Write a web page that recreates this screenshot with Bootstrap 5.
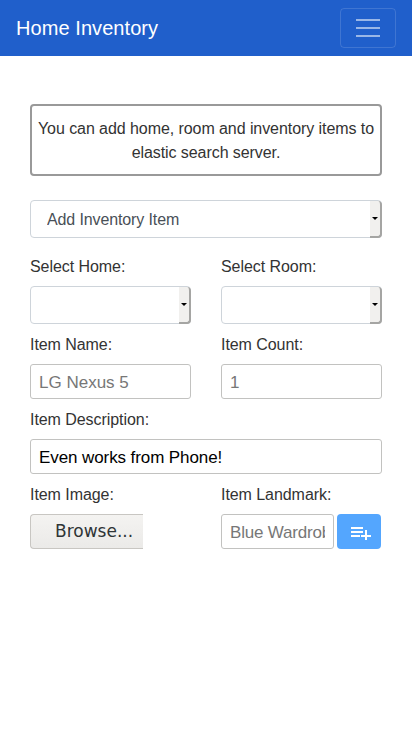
<!DOCTYPE html>
<html lang="en">
<head>
<meta charset="utf-8">
<meta name="viewport" content="width=device-width, initial-scale=1">
<title>Home Inventory</title>
<link rel="stylesheet" href="https://cdn.jsdelivr.net/npm/bootstrap@5.3.0/dist/css/bootstrap.min.css">
<style>
body{font-family:"Liberation Sans",Arial,sans-serif;font-size:16px;color:#212529;background:#fff}
.inv-nav{background:#205fcb;height:56px;padding:8px 16px}
.inv-brand{color:#fff;font-size:20px;line-height:24px;letter-spacing:.07px}
.inv-toggler{width:56px;height:40px;border:1px solid rgba(255,255,255,.14);border-radius:4px;background:transparent;padding:0;gap:6px}
.inv-toggler i{display:block;width:24px;height:2px;background:rgba(255,255,255,.55)}
.inv-page{padding:48px 30px 0}
.inv-note{border:2px solid #999;border-radius:4px;height:72px;padding:11px 4px 0;line-height:24px;margin-bottom:24px;color:#333;font-size:16px;letter-spacing:-.07px}
.inv-selwrap{position:relative;height:38px}
.inv-sel{display:block;width:100%;height:38px;border:1px solid #ced4da;border-radius:4px;background:#fff;color:#495057;font-size:16px;padding:2px 16px 0;letter-spacing:-.12px;appearance:none;-webkit-appearance:none}
.inv-arrow{position:absolute;top:1px;right:0;bottom:0;width:12px;background:#f1f0ee;border-right:2px solid #a5a5a3;border-bottom:2px solid #a5a5a3;border-radius:0 4px 4px 0;display:flex;align-items:center;justify-content:center}
.inv-arrow::after{content:"";display:block;border-style:solid;border-width:3px 3px 0;border-color:#000 transparent transparent}
.inv-grid{display:grid;grid-template-columns:161px 161px;column-gap:30px}
.inv-label{line-height:20px;height:20px;margin:0 0 9px;color:#333;letter-spacing:-.06px}
.inv-cell{margin-top:11px}
.inv-cell-first{margin-top:19px}
.inv-wide{grid-column:1 / span 2}
.inv-input{display:block;width:100%;height:35px;border:1px solid #c2c2c0;border-radius:3px;padding:2px 8px 0;font-family:"Liberation Sans",Arial,sans-serif;font-size:17px;color:#000;background:#fff;outline:0}
.inv-input-value{letter-spacing:-.09px}
.inv-input::placeholder{color:#777;opacity:1}
.inv-browse{display:block;width:113px;height:35px;border:1px solid #c8c6c2;border-right:0;border-radius:4px 0 0 4px;background:linear-gradient(#f4f3f1,#ebeae8);font-family:"DejaVu Sans",sans-serif;font-size:17px;color:#2e3436;padding:0 0 0 24px;text-align:left;white-space:nowrap;overflow:hidden}
.inv-addbtn{flex:0 0 44px;width:44px;height:35px;background:#54a6fe;border:0;border-radius:4px;padding:0;margin-left:3px}
.inv-landmark{flex:0 0 113px;width:113px;letter-spacing:-.18px}
</style>
</head>
<body>
<nav class="navbar inv-nav d-flex justify-content-between align-items-center flex-nowrap">
  <span class="inv-brand">Home Inventory</span>
  <button class="inv-toggler d-flex flex-column align-items-center justify-content-center" type="button" aria-label="Toggle navigation"><i></i><i></i><i></i></button>
</nav>
<main class="inv-page">
  <div class="inv-note text-center">You can add home, room and inventory items to elastic search server.</div>
  <div class="inv-selwrap">
    <select class="inv-sel"><option>Add Inventory Item</option></select>
    <span class="inv-arrow"></span>
  </div>
  <div class="inv-grid">
    <div class="inv-cell inv-cell-first">
      <label class="inv-label d-block">Select Home:</label>
      <div class="inv-selwrap"><select class="inv-sel"><option></option></select><span class="inv-arrow"></span></div>
    </div>
    <div class="inv-cell inv-cell-first">
      <label class="inv-label d-block">Select Room:</label>
      <div class="inv-selwrap"><select class="inv-sel"><option></option></select><span class="inv-arrow"></span></div>
    </div>
    <div class="inv-cell">
      <label class="inv-label d-block">Item Name:</label>
      <input class="inv-input" type="text" placeholder="LG Nexus 5">
    </div>
    <div class="inv-cell">
      <label class="inv-label d-block">Item Count:</label>
      <input class="inv-input" type="text" placeholder="1">
    </div>
    <div class="inv-cell inv-wide">
      <label class="inv-label d-block">Item Description:</label>
      <input class="inv-input inv-input-value" type="text" value="Even works from Phone!">
    </div>
    <div class="inv-cell">
      <label class="inv-label d-block">Item Image:</label>
      <button class="inv-browse" type="button">Browse...</button>
    </div>
    <div class="inv-cell">
      <label class="inv-label d-block">Item Landmark:</label>
      <div class="d-flex">
        <input class="inv-input inv-landmark" type="text" placeholder="Blue Wardrobe">
        <button class="inv-addbtn d-flex align-items-center justify-content-center" type="button" aria-label="Add">
          <svg width="24" height="17" viewBox="0 0 24 17" fill="#fff"><rect x="4" y="4" width="12" height="2"/><rect x="4" y="8" width="12" height="2"/><rect x="4" y="12" width="9" height="2"/><rect x="14" y="12" width="10" height="2"/><rect x="18" y="7" width="2" height="10"/></svg>
        </button>
      </div>
    </div>
  </div>
</main>
<script src="https://cdn.jsdelivr.net/npm/bootstrap@5.3.0/dist/js/bootstrap.bundle.min.js"></script>
</body>
</html>
